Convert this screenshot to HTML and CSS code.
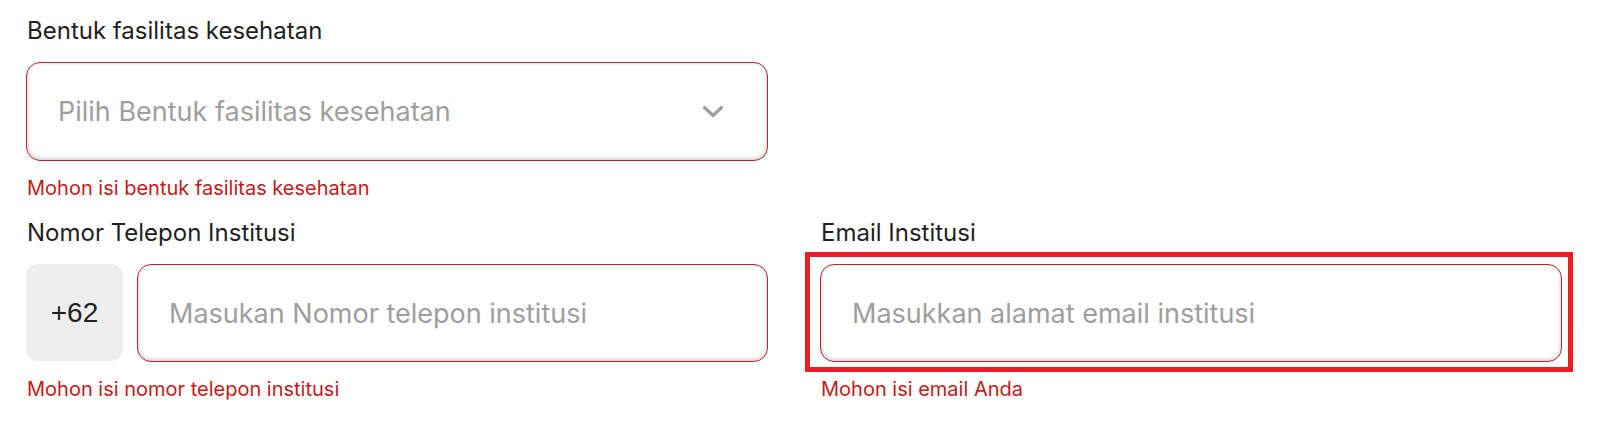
FILE: index.html
```html
<!DOCTYPE html>
<html lang="id">
<head>
    <meta charset="UTF-8">
    <meta name="viewport" content="width=device-width, initial-scale=1.0">
    <title>Data Institusi</title>
    <link rel="stylesheet" href="styles.css">
</head>
<body>
    <form class="form-grid">
        <div class="field">
            <label class="field-label" for="bentuk">Bentuk fasilitas kesehatan</label>
            <div class="select-box" id="bentuk" tabindex="0">
                <span class="select-placeholder">Pilih Bentuk fasilitas kesehatan</span>
                <svg class="chevron" width="22" height="14" viewBox="0 0 22 14">
                    <polyline points="2.5,2.5 11,10.5 19.5,2.5" fill="none" stroke="#9e9e9e" stroke-width="3.2" stroke-linecap="round" stroke-linejoin="round"/>
                </svg>
            </div>
            <p class="field-error">Mohon isi bentuk fasilitas kesehatan</p>
        </div>
        <div></div>

        <div class="field">
            <label class="field-label" for="telepon">Nomor Telepon Institusi</label>
            <div class="phone-row">
                <div class="phone-prefix">+62</div>
                <input class="text-input" type="tel" id="telepon" placeholder="Masukan Nomor telepon institusi">
            </div>
            <p class="field-error">Mohon isi nomor telepon institusi</p>
        </div>

        <div class="field">
            <label class="field-label" for="email">Email Institusi</label>
            <div class="highlight-wrap">
                <input class="text-input" type="email" id="email" placeholder="Masukkan alamat email institusi">
                <span class="highlight"></span>
            </div>
            <p class="field-error">Mohon isi email Anda</p>
        </div>
    </form>
</body>
</html>
```

FILE: styles.css
```css
:root {
    --text-color: #1f1f1f;
    --placeholder: #9e9e9e;
    --error-color: #c41a1a;
    --border-error: #bd2328;
    --prefix-bg: #eeeeee;
    --highlight: #ee1c25;
}

* {
    margin: 0;
    padding: 0;
    box-sizing: border-box;
}

body {
    font-family: 'Inter', sans-serif;
    background-color: white;
    color: var(--text-color);
}

.form-grid {
    display: grid;
    grid-template-columns: 742px 742px;
    column-gap: 52px;
    row-gap: 14px;
    padding: 14px 0 0 26px;
}

.field {
    display: flex;
    flex-direction: column;
}

.field-label {
    font-size: 24px;
    line-height: 33px;
    margin-bottom: 15px;
    padding-left: 1px;
}

.field-error {
    font-size: 20px;
    line-height: 27px;
    color: var(--error-color);
    margin-top: 14px;
    padding-left: 1px;
}

.select-box,
.text-input {
    height: 98px;
    border: 1.5px solid var(--border-error);
    border-radius: 14px;
    background-color: white;
    box-shadow: inset 0 -1px 4px rgba(0, 0, 0, 0.25);
    font-family: 'Inter', sans-serif;
    font-size: 27px;
    color: var(--text-color);
}

.select-box {
    height: 99px;
    display: flex;
    align-items: center;
    justify-content: space-between;
    padding: 0 43px 0 31px;
    cursor: pointer;
}

.select-placeholder {
    color: var(--placeholder);
}

.text-input {
    width: 100%;
    padding: 0 31px;
    outline: none;
}

.text-input::placeholder {
    color: var(--placeholder);
}

.phone-row {
    display: flex;
    gap: 14px;
}

.phone-prefix {
    flex: 0 0 97px;
    height: 97px;
    display: flex;
    align-items: center;
    justify-content: center;
    background-color: var(--prefix-bg);
    border-radius: 12px;
    font-family: 'Liberation Sans', Arial, sans-serif;
    font-size: 28px;
    color: #222;
}

.phone-row .text-input {
    flex: 1;
}

.highlight-wrap {
    position: relative;
}

.highlight {
    position: absolute;
    top: -12px;
    left: -15px;
    right: -11px;
    bottom: -10px;
    border: 5px solid var(--highlight);
    pointer-events: none;
}
```
